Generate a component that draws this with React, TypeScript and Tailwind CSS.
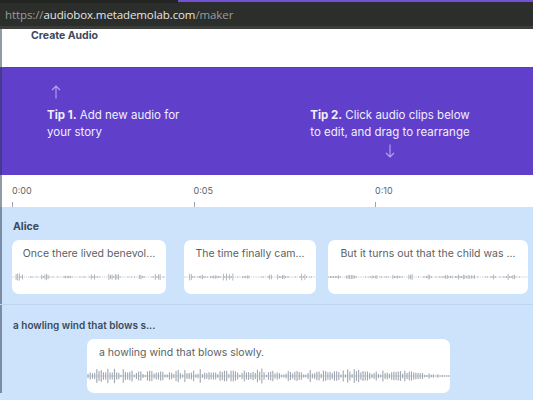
import React from "react";

function rng(seed: number) {
  let s = seed >>> 0;
  return () => {
    s = (s * 1664525 + 1013904223) >>> 0;
    return s / 4294967296;
  };
}

function Wave({ width, height, seed, dense }: { width: number; height: number; seed: number; dense?: boolean }) {
  const r = rng(seed);
  const bars: React.ReactNode[] = [];
  const mid = height / 2;
  const step = dense ? 2.2 : 1.6;
  const n = Math.floor(width / step);
  const clusters: { c: number; w: number; a: number }[] = [];
  if (!dense) {
    let x = 5 + r() * 8;
    while (x < width - 6) {
      clusters.push({ c: x, w: 2 + r() * 4, a: 2 + r() * 5 });
      x += 10 + r() * 20;
    }
  }
  for (let i = 0; i < n; i++) {
    const x = i * step + 0.5;
    let h: number;
    if (dense) {
      const tail = x > width * 0.88 ? Math.max(0.12, (width - x) / (width * 0.12)) : 1;
      h = (2 + r() * 9 + (r() > 0.82 ? 4 : 0)) * tail;
    } else {
      let near = 0;
      let amp = 0;
      for (const cl of clusters) {
        const d = Math.abs(x - cl.c);
        if (d < cl.w) {
          const v = 1 - d / cl.w;
          if (v > near) {
            near = v;
            amp = cl.a;
          }
        }
      }
      if (near > 0) {
        h = 1 + (r() > 0.35 ? amp * (0.5 + r() * 0.5) : 1);
      } else {
        h = r() > 0.6 ? 1.2 : 0;
      }
    }
    if (h > 0)
      bars.push(
        <rect key={i} x={x} y={mid - h / 2} width={dense ? 1.1 : 0.8} height={h} fill="#a0a7b1" />
      );
  }
  return (
    <svg width={width} height={height} className="block">
      <line x1="0" y1={mid} x2={width} y2={mid} stroke="#bcc2ca" strokeWidth="0.7" strokeDasharray={dense ? undefined : "1.5 0.8"} />
      {bars}
    </svg>
  );
}

function Clip({ w, text, seed }: { w: number; text: string; seed: number }) {
  return (
    <div className="bg-white rounded-[7px] h-[54px] flex flex-col shrink-0 overflow-hidden" style={{ width: w }}>
      <div className="h-[20px] flex items-end justify-center px-3 text-[10.5px] leading-[13px] text-[#5b5f66] whitespace-nowrap">{text}</div>
      <div className="mt-[12px]">
        <Wave width={w} height={10} seed={seed} />
      </div>
    </div>
  );
}

function ArrowUp() {
  return (
    <svg width="10" height="14" viewBox="0 0 10 14" fill="none" stroke="#b8a6f2" strokeWidth="1.1">
      <path d="M5 13.5V1M1 5l4-4 4 4" />
    </svg>
  );
}
function ArrowDown() {
  return (
    <svg width="10" height="14" viewBox="0 0 10 14" fill="none" stroke="#b8a6f2" strokeWidth="1.1">
      <path d="M5 0.5V13M1 9l4 4 4-4" />
    </svg>
  );
}

export default function App() {
  const edge = "shadow-[inset_2px_0_0_rgba(40,55,80,0.5)]";
  return (
    <div className="w-[533px] h-[400px] overflow-hidden bg-[#cce3fb]" style={{ fontFamily: "Inter, 'Noto Sans', sans-serif" }}>
      {/* browser bar */}
      <div className="bg-[#2c2e2c] h-[29px] flex flex-col">
        <div className="h-[3px] flex">
          <div className="w-[178px] bg-[#232523]" />
          <div className="flex-1 flex flex-col">
            <div className="h-[2px] bg-[#7450d6]" />
          </div>
        </div>
        <div className="flex-1 flex items-center pl-[5px] text-[11.5px] tracking-[-0.1px]" style={{ fontFamily: "'Open Sans', sans-serif" }}>
          <span className="text-[#9b9d9b]">https://</span>
          <span className="text-[#e6e6e6]">audiobox.metademolab.com</span>
          <span className="text-[#9b9d9b]">/maker</span>
        </div>
        <div className="h-[3px] bg-[#3b3d3b]" />
      </div>

      {/* header */}
      <div className={`bg-white h-[38px] pl-[31px] ${edge}`}>
        <div className="text-[10.5px] font-bold text-[#3c4a5c] leading-[13px]">Create Audio</div>
      </div>

      {/* tips */}
      <div className={`bg-[#603fcb] h-[108px] flex text-white text-[11.5px] leading-[16.5px] border-t border-[#5a3bc0] ${edge}`}>
        <div className="pl-[47px] pt-[17px] flex-1">
          <div className="pl-[4px] h-[16px]">
            <ArrowUp />
          </div>
          <div className="mt-[6px] text-[#f1eefc]">
            <span className="font-bold">Tip 1.</span> Add new audio for
            <br />
            your story
          </div>
        </div>
        <div className="w-[200px] mr-[43px] pt-[39px] flex flex-col items-center text-center">
          <div className="text-[#f1eefc] whitespace-nowrap">
            <span className="font-bold">Tip 2.</span> Click audio clips below
            <br />
            to edit, and drag to rearrange
          </div>
          <div className="mt-[4px]">
            <ArrowDown />
          </div>
        </div>
      </div>

      {/* timeline */}
      <div className={`bg-white h-[32px] flex pl-[12px] ${edge}`}>
        {["0:00", "0:05", "0:10"].map((t) => (
          <div key={t} className="w-[181.5px] shrink-0 flex flex-col">
            <div className="text-[9px] text-[#5d636b] pt-[10px] leading-[11px]">{t}</div>
            <div className="mt-auto w-px h-[5px] bg-[#9ca3ab]" />
          </div>
        ))}
      </div>

      {/* tracks */}
      <div className={`${edge}`}>
        <div className="pt-[13px] pb-[10px] border-b border-[#bcd6f2]">
          <div className="pl-[13px] text-[10.5px] font-bold text-[#3c4a5c] leading-[13px]">Alice</div>
          <div className="mt-[7px] flex pl-[12px]">
            <Clip w={154} text="Once there lived benevol..." seed={3} />
            <div className="w-[18px] shrink-0" />
            <Clip w={132} text="The time finally cam..." seed={9} />
            <div className="w-[12px] shrink-0" />
            <Clip w={200} text="But it turns out that the child was ..." seed={17} />
          </div>
        </div>
        <div className="pt-[14px]">
          <div className="pl-[13px] text-[10px] font-semibold text-[#3c4a5c] leading-[13px]">a howling wind that blows s...</div>
          <div className="mt-[7px] pl-[87px]">
            <div className="bg-white rounded-[7px] w-[363px] h-[54px] overflow-hidden flex flex-col">
              <div className="h-[20px] flex items-end pl-[12px] text-[10.5px] leading-[13px] text-[#5b5f66]">a howling wind that blows slowly.</div>
              <div className="mt-[9px]">
                <Wave width={363} height={16} seed={42} dense />
              </div>
            </div>
          </div>
        </div>
      </div>
    </div>
  );
}
